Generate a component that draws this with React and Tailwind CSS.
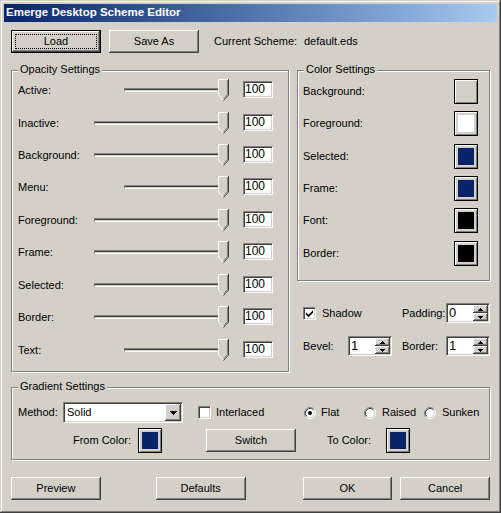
import React from 'react';

const raised =
  'bg-[#d4d0c8] shadow-[inset_-1px_-1px_#404040,inset_1px_1px_#fff,inset_-2px_-2px_#808080]';
const sunken =
  'border border-t-[#808080] border-l-[#808080] border-b-white border-r-white p-[1px] shadow-[inset_1px_1px_#404040,inset_-1px_-1px_#d4d0c8]';

const opacityRows = [
  { label: 'Active:', short: true, gap: 'mt-0' },
  { label: 'Inactive:', short: false, gap: 'mt-[11px]' },
  { label: 'Background:', short: false, gap: 'mt-[10px]' },
  { label: 'Menu:', short: true, gap: 'mt-[10px]' },
  { label: 'Foreground:', short: false, gap: 'mt-[11px]' },
  { label: 'Frame:', short: false, gap: 'mt-[10px]' },
  { label: 'Selected:', short: false, gap: 'mt-[11px]' },
  { label: 'Border:', short: false, gap: 'mt-[10px]' },
  { label: 'Text:', short: true, gap: 'mt-[11px]' },
];

const colorRows = [
  { label: 'Background:', fill: 'bg-[#d4d0c8]', gap: 'mt-0' },
  { label: 'Foreground:', fill: 'bg-white', gap: 'mt-[7px]' },
  { label: 'Selected:', fill: 'bg-[#0a246a]', gap: 'mt-[8px]' },
  { label: 'Frame:', fill: 'bg-[#0a246a]', gap: 'mt-[7px]' },
  { label: 'Font:', fill: 'bg-black', gap: 'mt-[7px]' },
  { label: 'Border:', fill: 'bg-black', gap: 'mt-[8px]' },
];

function Button({ children, isDefault, className = '' }) {
  if (isDefault) {
    return (
      <div className={`w-[90px] h-[23px] border border-black ${className}`}>
        <div className={`relative w-full h-full flex items-center justify-center ${raised}`}>
          <div className="absolute inset-[3px] border border-dotted border-black" />
          <span>{children}</span>
        </div>
      </div>
    );
  }
  return (
    <div className={`w-[90px] h-[23px] flex items-center justify-center ${raised} ${className}`}>
      {children}
    </div>
  );
}

function Group({ title, className = '', children }) {
  return (
    <div className={`relative border border-[#808080] shadow-[inset_1px_1px_#fff,1px_1px_#fff] ${className}`}>
      <div className="absolute left-[6px] -top-[8px] px-[2px] leading-[13px] bg-[#d4d0c8]">{title}</div>
      {children}
    </div>
  );
}

function Thumb() {
  return (
    <svg width="11" height="23" viewBox="0 0 11 23" className="absolute right-0 top-0">
      <path d="M0 0H11V16L5.5 22.5L0 16Z" fill="#d4d0c8" />
      <path d="M0.5 16V0.5H10" stroke="#fff" fill="none" />
      <path d="M0.5 16L5.5 21" stroke="#fff" fill="none" />
      <path d="M10.5 0V16L5.5 21.5" stroke="#404040" fill="none" />
      <path d="M9.5 1V15.6L5.5 19.8" stroke="#808080" fill="none" />
    </svg>
  );
}

function Slider({ short }) {
  return (
    <div className={`relative h-[22px] ${short ? 'w-[105px]' : 'w-[135px]'}`}>
      <div className="absolute left-0 right-[2px] top-[9px] h-[4px] border border-t-[#808080] border-l-[#808080] border-b-white border-r-white shadow-[inset_0_1px_#404040]" />
      <Thumb />
    </div>
  );
}

function Swatch({ fill }) {
  return (
    <div className="w-[24px] h-[25px] border border-black p-[3px] bg-[#d4d0c8] shadow-[inset_1px_1px_#fff,inset_-1px_-1px_#808080]">
      <div className={`w-full h-full ${fill}`} />
    </div>
  );
}

function Arrow({ down }) {
  return (
    <svg width="5" height="3" viewBox="0 0 5 3">
      {down ? (
        <path d="M0 0h5v1H0zM1 1h3v1H1zM2 2h1v1H2z" fill="#000" />
      ) : (
        <path d="M2 0h1v1H2zM1 1h3v1H1zM0 2h5v1H0z" fill="#000" />
      )}
    </svg>
  );
}

function Spinner({ value }) {
  return (
    <div className={`w-[44px] h-[20px] bg-white flex ${sunken}`}>
      <span className="flex-1 pl-[1px] leading-[16px] text-[13px]">{value}</span>
      <div className="w-[15px] flex flex-col">
        <div className={`h-[8px] flex items-center justify-center ${raised}`}>
          <Arrow />
        </div>
        <div className={`h-[8px] flex items-center justify-center ${raised}`}>
          <Arrow down />
        </div>
      </div>
    </div>
  );
}

function Checkbox({ checked }) {
  return (
    <div className={`w-[13px] h-[13px] bg-white flex items-center justify-center ${sunken}`}>
      {checked && (
        <svg width="7" height="7" viewBox="0 0 7 7">
          <path d="M0 2.3L2.5 4.8L7 0.3V2.7L2.5 7.2L0 4.7Z" fill="#000" />
        </svg>
      )}
    </div>
  );
}

function Radio({ checked }) {
  return (
    <svg width="12" height="12" viewBox="0 0 12 12">
      <circle cx="6" cy="6" r="5" fill="#fff" />
      <path d="M2.11 9.89A5.5 5.5 0 0 1 9.89 2.11" stroke="#808080" fill="none" />
      <path d="M9.89 2.11A5.5 5.5 0 0 1 2.11 9.89" stroke="#fff" fill="none" />
      <path d="M2.82 9.18A4.5 4.5 0 0 1 9.18 2.82" stroke="#404040" fill="none" />
      <path d="M9.18 2.82A4.5 4.5 0 0 1 2.82 9.18" stroke="#d4d0c8" fill="none" />
      {checked && <circle cx="6" cy="6" r="2" fill="#000" />}
    </svg>
  );
}

export default function App() {
  return (
    <div className="w-[501px] h-[513px] p-[4px] bg-[#d4d0c8] text-black text-[11px] font-['Liberation_Sans',Arial,sans-serif] shadow-[inset_-1px_-1px_#404040,inset_1px_1px_#d4d0c8,inset_-2px_-2px_#808080,inset_2px_2px_#fff]">
      {/* Title bar */}
      <div className="h-[18px] pl-[2px] flex items-center bg-linear-to-r from-[#0a246a] to-[#a6caf0] text-white font-bold text-[11.5px]">
        Emerge Desktop Scheme Editor
      </div>

      <div className="px-[7px]">
        {/* Top row */}
        <div className="mt-[8px] flex items-center">
          <Button isDefault>Load</Button>
          <Button className="ml-[8px]">Save As</Button>
          <span className="ml-[15px] w-[90px]">Current Scheme:</span>
          <span>default.eds</span>
        </div>

        {/* Groups */}
        <div className="mt-[17px] flex gap-[8px]">
          <Group title="Opacity Settings" className="w-[278px] h-[302px] pt-[8px] pl-[6px]">
            {opacityRows.map((r) => (
              <div key={r.label} className={`flex h-[22px] ${r.gap}`}>
                <span className={`leading-[22px] ${r.short ? 'w-[106px]' : 'w-[76px]'}`}>{r.label}</span>
                <Slider short={r.short} />
                <div className={`ml-[14px] mt-[2px] w-[30px] h-[17px] bg-white leading-[13px] text-[12px] ${sunken}`}>100</div>
              </div>
            ))}
          </Group>

          <div className="w-[193px]">
            <Group title="Color Settings" className="h-[211px] pt-[8px] pl-[5px] pr-[11px]">
              {colorRows.map((r) => (
                <div key={r.label} className={`flex items-center justify-between h-[25px] ${r.gap}`}>
                  <span>{r.label}</span>
                  <Swatch fill={r.fill} />
                </div>
              ))}
            </Group>

            <div className="mt-[22px] pl-[6px] flex items-center h-[20px]">
              <div className="w-[99px] flex items-center gap-[6px]">
                <Checkbox checked />
                <span>Shadow</span>
              </div>
              <span className="w-[44px]">Padding:</span>
              <Spinner value="0" />
            </div>
            <div className="mt-[13px] pl-[6px] flex items-center h-[20px]">
              <span className="w-[45px]">Bevel:</span>
              <Spinner value="1" />
              <span className="ml-[10px] w-[44px]">Border:</span>
              <Spinner value="1" />
            </div>
          </div>
        </div>

        {/* Gradient */}
        <Group title="Gradient Settings" className="mt-[15px] h-[73px] pt-[14px] pl-[6px]">
          <div className="flex items-center h-[21px]">
            <span className="w-[45px]">Method:</span>
            <div className={`w-[120px] h-[21px] bg-white flex ${sunken}`}>
              <span className="flex-1 pl-[2px] leading-[17px]">Solid</span>
              <div className={`w-[16px] h-[17px] flex items-center justify-center ${raised}`}>
                <svg width="7" height="4" viewBox="0 0 7 4">
                  <path d="M0 0h7v1H0zM1 1h5v1H1zM2 2h3v1H2zM3 3h1v1H3z" fill="#000" />
                </svg>
              </div>
            </div>
            <div className="ml-[15px] w-[106px] flex items-center gap-[5px]">
              <Checkbox />
              <span>Interlaced</span>
            </div>
            <div className="w-[60px] flex items-center gap-[5px]">
              <Radio checked />
              <span>Flat</span>
            </div>
            <div className="w-[60px] flex items-center gap-[6px]">
              <Radio />
              <span>Raised</span>
            </div>
            <div className="flex items-center gap-[6px]">
              <Radio />
              <span>Sunken</span>
            </div>
          </div>
          <div className="mt-[5px] flex items-center h-[25px]">
            <span className="w-[113px] text-right">From Color:</span>
            <div className="ml-[7px]">
              <Swatch fill="bg-[#0a246a]" />
            </div>
            <Button className="ml-[44px]">Switch</Button>
            <span className="ml-[31px] w-[59px]">To Color:</span>
            <Swatch fill="bg-[#0a246a]" />
          </div>
        </Group>

        {/* Bottom buttons */}
        <div className="mt-[17px] flex">
          <Button>Preview</Button>
          <Button className="ml-[55px]">Defaults</Button>
          <Button className="ml-[57px]">OK</Button>
          <Button className="ml-[8px]">Cancel</Button>
        </div>
      </div>
    </div>
  );
}
